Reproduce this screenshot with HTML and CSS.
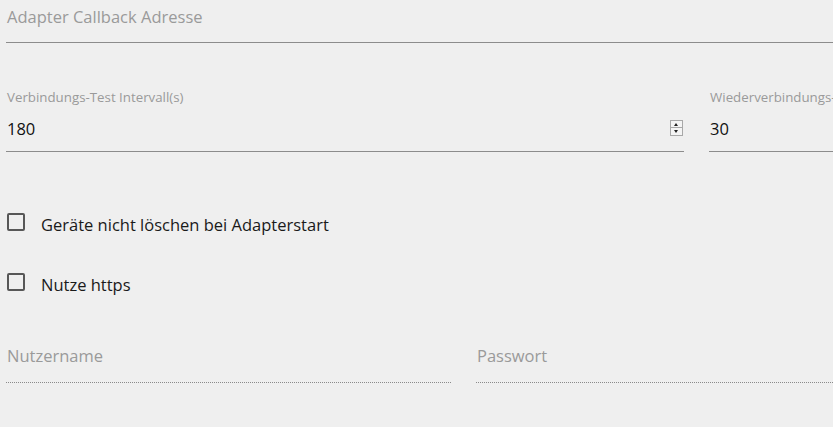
FILE: index.html
```html
<!DOCTYPE html>
<html lang="de">
<head>
<meta charset="utf-8">
<link rel="stylesheet" href="styles.css">
</head>
<body>
<div class="form">
  <div class="row">
    <div class="field field-full">
      <div class="placeholder first">Adapter Callback Adresse</div>
      <div class="line"></div>
    </div>
  </div>
  <div class="row row-num">
    <div class="field field-half">
      <div class="label">Verbindungs-Test Intervall(s)</div>
      <div class="value-row">
        <span class="value">180</span>
        <span class="spinner"><span class="up"></span><span class="down"></span></span>
      </div>
      <div class="line"></div>
    </div>
    <div class="field field-half">
      <div class="label">Wiederverbindungs-Intervall(s)</div>
      <div class="value-row">
        <span class="value">30</span>
      </div>
      <div class="line"></div>
    </div>
  </div>
  <div class="check-row check-first">
    <span class="box"></span>
    <span class="check-label">Geräte nicht löschen bei Adapterstart</span>
  </div>
  <div class="check-row check-second">
    <span class="box"></span>
    <span class="check-label">Nutze https</span>
  </div>
  <div class="row row-auth">
    <div class="field field-third">
      <div class="placeholder">Nutzername</div>
      <div class="line dotted"></div>
    </div>
    <div class="field field-third">
      <div class="placeholder">Passwort</div>
      <div class="line dotted"></div>
    </div>
  </div>
</div>
</body>
</html>
```
FILE: styles.css
```css
html, body {
  margin: 0;
  padding: 0;
  background: #efefef;
  overflow: hidden;
}
body {
  width: 833px;
  height: 427px;
  font-family: "Open Sans", "Noto Sans", sans-serif;
}
.form {
  width: 1400px;
  padding-left: 6px;
}
.row {
  display: flex;
  gap: 25px;
}
.field-full { width: 1380px; }
.field-half { width: 678px; }
.field-third { width: 445px; }
.placeholder {
  font-size: 16.5px;
  color: #9a9a9a;
  line-height: 22px;
  padding-left: 1px;
  box-sizing: border-box;
}
.placeholder.first { padding-top: 6px; height: 42px; }
.line {
  height: 1px;
  background: #8c8c8c;
}
.line.dotted {
  background: none;
  border-top: 1px dotted #8a8a8a;
  height: 0;
}
.row-num { margin-top: 45px; }
.label {
  font-size: 13.3px;
  color: #9a9a9a;
  line-height: 18px;
  padding-left: 1px;
  height: 18px;
  white-space: nowrap;
}
.value-row {
  display: flex;
  align-items: center;
  justify-content: space-between;
  height: 45px;
  padding: 0 1px;
}
.value {
  font-size: 16.5px;
  color: #111;
  line-height: 22px;
}
.spinner {
  display: flex;
  flex-direction: column;
  width: 11px;
  height: 14px;
  border: 1px solid #a8a8a8;
  background: #f4f4f4;
  margin-top: -2px;
}
.spinner span {
  flex: 1;
  position: relative;
}
.spinner .up { border-bottom: 1px solid #a8a8a8; }
.spinner .up::after, .spinner .down::after {
  content: "";
  position: absolute;
  left: 3px;
  width: 0; height: 0;
  border-left: 2.5px solid transparent;
  border-right: 2.5px solid transparent;
}
.spinner .up::after { top: 2px; border-bottom: 3px solid #222; }
.spinner .down::after { top: 2px; border-top: 3px solid #222; }
.check-row {
  display: flex;
  align-items: center;
  height: 24px;
}
.check-first { margin-top: 58px; }
.check-second { margin-top: 36px; }
.box {
  width: 18px;
  height: 18px;
  box-sizing: border-box;
  border: 2px solid #575757;
  border-radius: 2px;
  margin-left: 1px;
}
.check-label {
  margin-left: 16px;
  padding-top: 6px;
  font-size: 16.5px;
  line-height: 22px;
  color: #1a1a1a;
}
.row-auth { margin-top: 51px; }
.row-auth .placeholder { height: 37px; }
```
